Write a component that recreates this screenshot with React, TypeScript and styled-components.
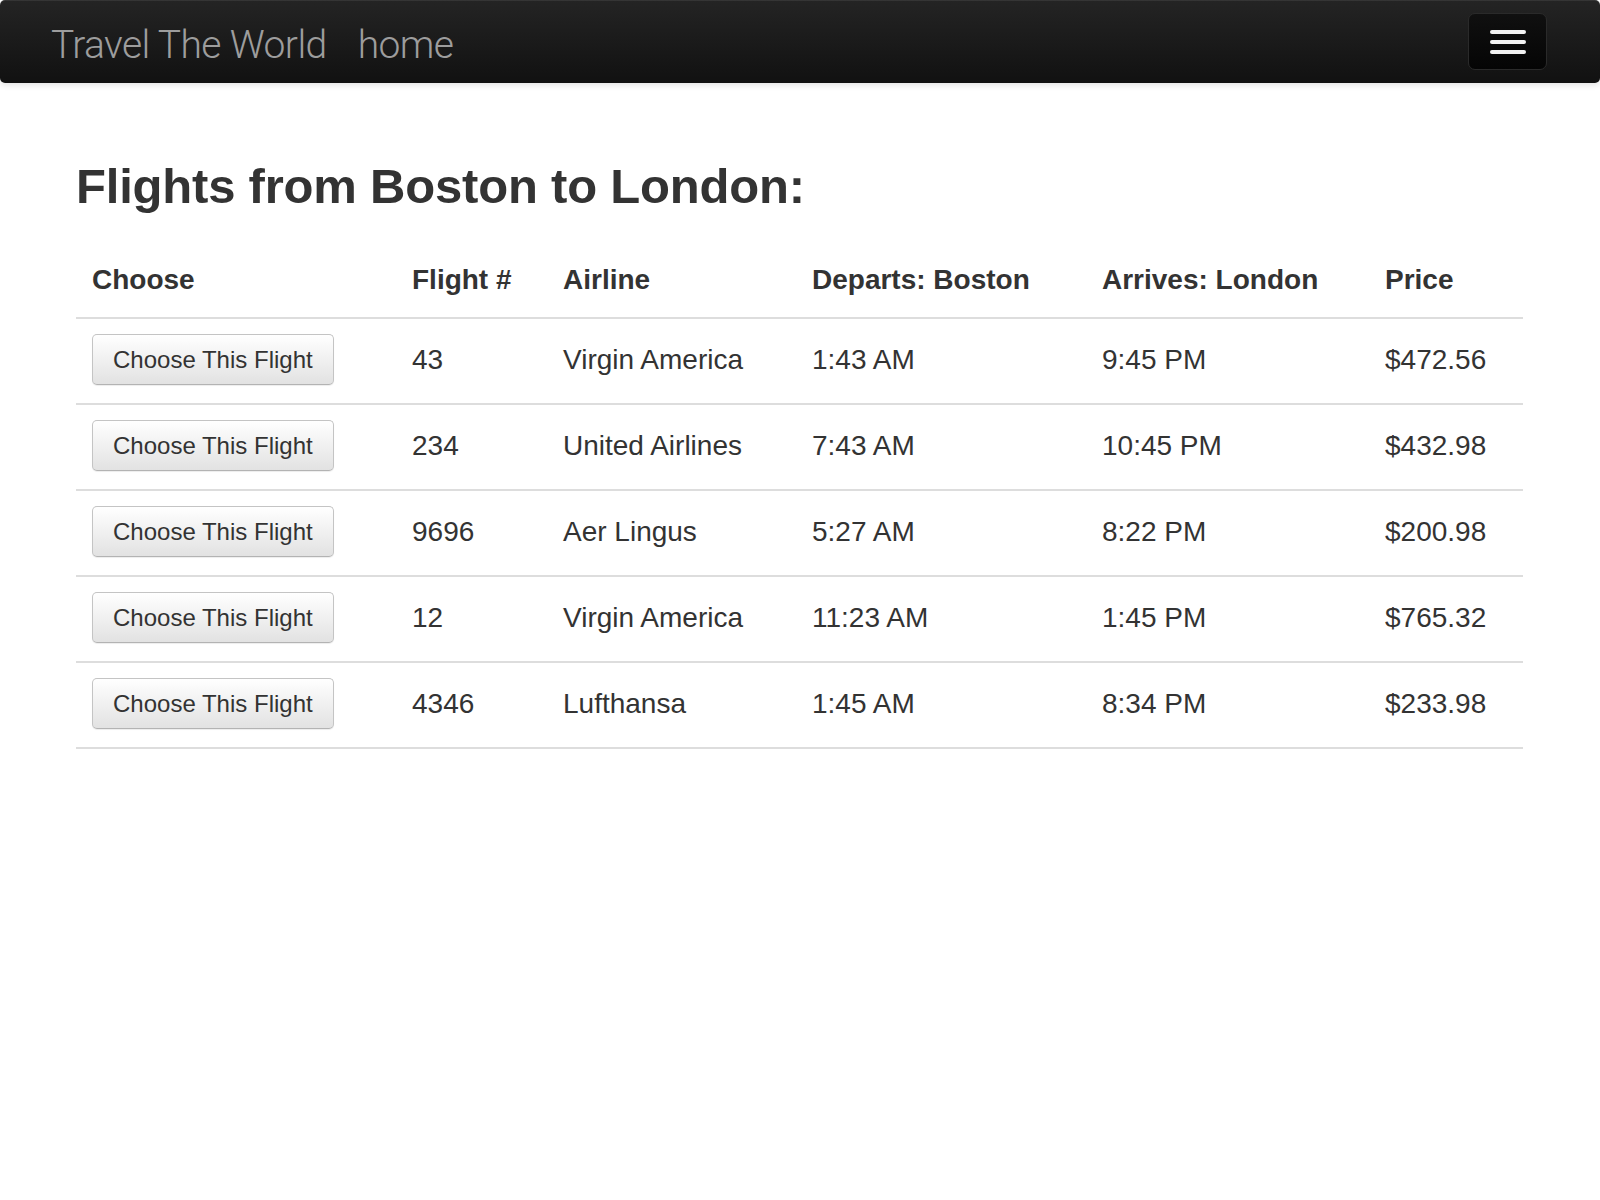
import React from "react";
import styled, { createGlobalStyle } from "styled-components";

const GlobalStyle = createGlobalStyle`
  html, body {
    margin: 0;
    padding: 0;
    background: #fff;
  }
  body {
    font-family: "Liberation Sans", Arial, sans-serif;
    color: #333;
    font-size: 28px;
    line-height: 34px;
  }
  * { box-sizing: border-box; }
`;

const Navbar = styled.nav`
  height: 83px;
  display: flex;
  align-items: center;
  justify-content: space-between;
  padding: 0 53px 0 51px;
  background: linear-gradient(to bottom, #242424 0%, #111111 100%);
  border-radius: 5px;
  box-shadow: inset 0 1px 0 rgba(255, 255, 255, 0.08), 0 2px 6px rgba(0, 0, 0, 0.12);
`;

const NavLeft = styled.div`
  display: flex;
  align-items: baseline;
  gap: 31px;
  padding-top: 6px;
`;

const NavLink = styled.a`
  font-family: Roboto, "Helvetica Neue", "Liberation Sans", sans-serif;
  font-weight: 300;
  font-size: 39px;
  letter-spacing: -0.6px;
  color: #9d9d9d;
  text-decoration: none;
  line-height: 48px;
`;

const Toggle = styled.button`
  width: 79px;
  height: 57px;
  border: 1px solid #2a2a2a;
  border-radius: 7px;
  background: linear-gradient(to bottom, #101010 0%, #050505 100%);
  display: flex;
  flex-direction: column;
  align-items: center;
  justify-content: center;
  gap: 6px;
  padding: 0;
  cursor: pointer;
`;

const Bar = styled.span`
  display: block;
  width: 36px;
  height: 4px;
  border-radius: 2px;
  background: #f2f2f2;
`;

const Container = styled.main`
  padding: 0 77px 0 76px;
`;

const Heading = styled.h1`
  margin: 76px 0 34px;
  font-size: 49px;
  line-height: 54px;
  font-weight: 700;
  color: #333;
  letter-spacing: -0.2px;
`;

const Table = styled.table`
  width: 100%;
  border-collapse: collapse;
  table-layout: fixed;
`;

const Col = styled.col<{ $w: number }>`
  width: ${(p) => p.$w}px;
`;

const Th = styled.th`
  text-align: left;
  font-weight: 700;
  padding: 16px 16px 20px;
  line-height: 34px;
  border-bottom: 2px solid #ddd;
  vertical-align: bottom;
  white-space: nowrap;
`;

const Row = styled.tr`
  border-bottom: 2px solid #ddd;
`;

const Td = styled.td`
  padding: 15px 16px 18px;
  height: 84px;
  vertical-align: middle;
  line-height: 34px;
  white-space: nowrap;
`;

const ChooseButton = styled.button`
  font-family: "Liberation Sans", Arial, sans-serif;
  font-size: 24px;
  line-height: 27px;
  color: #333;
  padding: 11px 20px;
  border: 1px solid #c4c4c4;
  border-bottom-color: #b3b3b3;
  border-radius: 5px;
  background: linear-gradient(to bottom, #ffffff 0%, #e2e2e2 100%);
  box-shadow: inset 0 1px 0 rgba(255, 255, 255, 0.15), 0 1px 1px rgba(0, 0, 0, 0.075);
  cursor: pointer;
  white-space: nowrap;
`;

const flights = [
  { num: "43", airline: "Virgin America", dep: "1:43 AM", arr: "9:45 PM", price: "$472.56" },
  { num: "234", airline: "United Airlines", dep: "7:43 AM", arr: "10:45 PM", price: "$432.98" },
  { num: "9696", airline: "Aer Lingus", dep: "5:27 AM", arr: "8:22 PM", price: "$200.98" },
  { num: "12", airline: "Virgin America", dep: "11:23 AM", arr: "1:45 PM", price: "$765.32" },
  { num: "4346", airline: "Lufthansa", dep: "1:45 AM", arr: "8:34 PM", price: "$233.98" },
];

const widths = [320, 151, 249, 290, 283, 154];

export default function App() {
  return (
    <>
      <GlobalStyle />
      <Navbar>
        <NavLeft>
          <NavLink href="#">Travel The World</NavLink>
          <NavLink href="#">home</NavLink>
        </NavLeft>
        <Toggle aria-label="Toggle navigation">
          <Bar />
          <Bar />
          <Bar />
        </Toggle>
      </Navbar>
      <Container>
        <Heading>Flights from Boston to London:</Heading>
        <Table>
          <colgroup>
            {widths.map((w, i) => (
              <Col key={i} $w={w} />
            ))}
          </colgroup>
          <thead>
            <tr>
              <Th>Choose</Th>
              <Th>Flight #</Th>
              <Th>Airline</Th>
              <Th>Departs: Boston</Th>
              <Th>Arrives: London</Th>
              <Th>Price</Th>
            </tr>
          </thead>
          <tbody>
            {flights.map((f) => (
              <Row key={f.num}>
                <Td>
                  <ChooseButton>Choose This Flight</ChooseButton>
                </Td>
                <Td>{f.num}</Td>
                <Td>{f.airline}</Td>
                <Td>{f.dep}</Td>
                <Td>{f.arr}</Td>
                <Td>{f.price}</Td>
              </Row>
            ))}
          </tbody>
        </Table>
      </Container>
    </>
  );
}
